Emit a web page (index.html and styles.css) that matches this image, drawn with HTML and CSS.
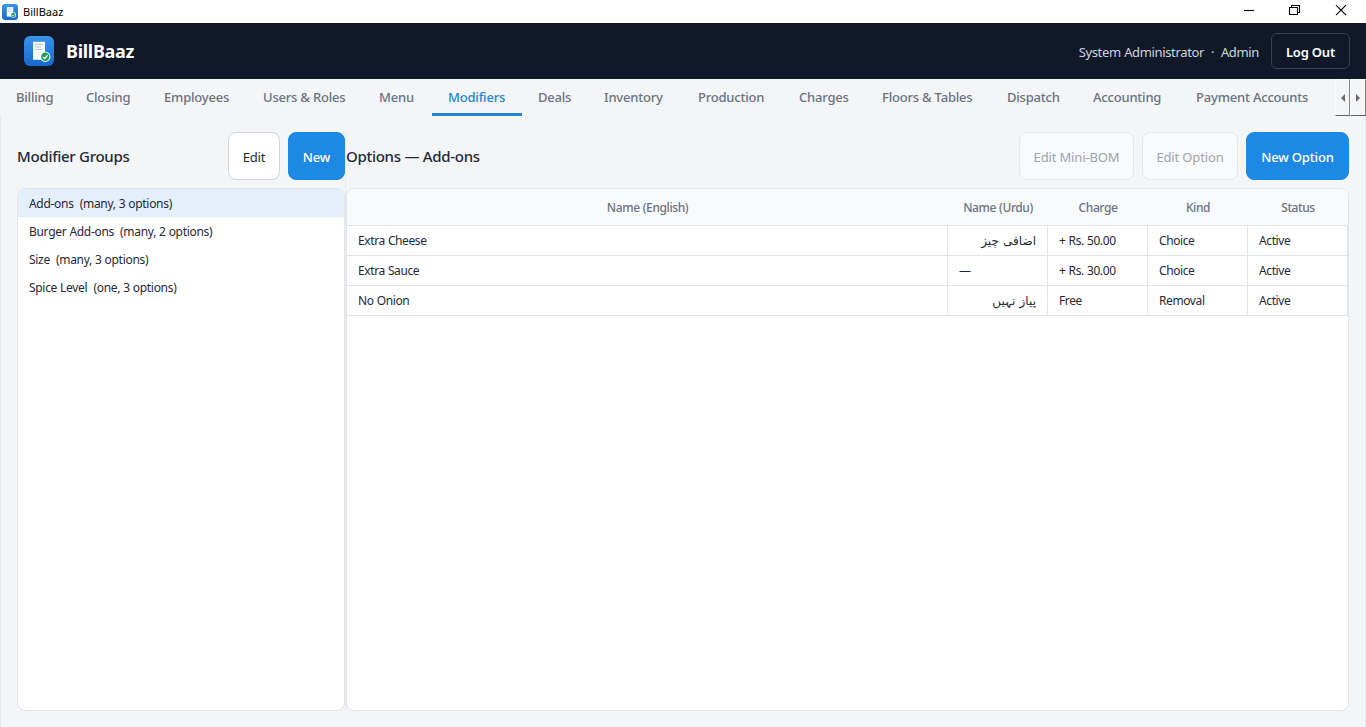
FILE: index.html
```
<!DOCTYPE html>
<html lang="en">
<head>
<meta charset="UTF-8">
<meta name="viewport" content="width=device-width, initial-scale=1.0">
<title>BillBaaz</title>
<link rel="stylesheet" href="styles.css">
</head>
<body>
  <!-- shared logo -->
  <svg width="0" height="0" class="defs">
    <defs>
      <linearGradient id="logoBlue" x1="0" y1="0" x2="0" y2="1">
        <stop offset="0" stop-color="#3a94ea"/>
        <stop offset="1" stop-color="#1769cc"/>
      </linearGradient>
      <symbol id="logo" viewBox="0 0 30 30">
        <rect width="30" height="30" rx="6" fill="url(#logoBlue)"/>
        <path d="M9 5.5l1 .5 1-.5 1 .5 1-.5 1 .5 1-.5 1 .5 1-.5 1 .5 1-.5 1 .5 1-.5V24l-1-.6-1 .6-1-.6-1 .6-1-.6-1 .6-1-.6-1 .6-1-.6-1 .6-1-.6-1 .6z" fill="#f7fafd"/>
        <path d="M11 8.500h8M11 11h6M11 13.500h8" stroke="#b3c7dc" stroke-width="1"/>
        <circle cx="21.300" cy="20.800" r="5.100" fill="#fff"/>
        <circle cx="21.300" cy="20.800" r="4.200" fill="#1f9d57"/>
        <path d="M19.100 21l1.600 1.600 2.900-3.300" fill="none" stroke="#fff" stroke-width="1.300"/>
      </symbol>
    </defs>
  </svg>

  <div class="titlebar">
    <svg class="title-icon" width="16" height="16"><use href="#logo"/></svg>
    <span class="title-text">BillBaaz</span>
    <div class="window-buttons">
      <svg width="46" height="23" viewBox="0 0 46 23"><path d="M18 10.500h10"/></svg>
      <svg width="46" height="23" viewBox="0 0 46 23"><path d="M17.500 7.500h8v7h-8zM19.500 7.500v-2h8v7h-2"/></svg>
      <svg width="46" height="23" viewBox="0 0 46 23"><path d="M18 5.200l10 10M28 5.200l-10 10"/></svg>
    </div>
  </div>

  <header class="header">
    <svg width="30" height="30"><use href="#logo"/></svg>
    <span class="brand">BillBaaz</span>
    <span class="user">System Administrator&nbsp; ·&nbsp; Admin</span>
    <button class="logout" type="button">Log Out</button>
  </header>

  <nav class="tabs">
    <a>Billing</a>
    <a>Closing</a>
    <a>Employees</a>
    <a>Users &amp; Roles</a>
    <a>Menu</a>
    <a class="active">Modifiers</a>
    <a>Deals</a>
    <a>Inventory</a>
    <a>Production</a>
    <a>Charges</a>
    <a>Floors &amp; Tables</a>
    <a>Dispatch</a>
    <a>Accounting</a>
    <a>Payment Accounts</a>
    <div class="scroller">
      <button type="button"><svg width="5" height="8"><path d="M5 0v8L1 4z"/></svg></button>
      <button type="button"><svg width="5" height="8"><path d="M0 0v8l4-4z"/></svg></button>
    </div>
  </nav>

  <main class="content">
    <section class="pane groups">
      <div class="toolbar">
        <h2>Modifier Groups</h2>
        <button class="btn edit" type="button">Edit</button>
        <button class="btn primary new" type="button">New</button>
      </div>
      <ul class="group-list">
        <li class="selected">Add-ons  (many, 3 options)</li>
        <li>Burger Add-ons  (many, 2 options)</li>
        <li>Size  (many, 3 options)</li>
        <li>Spice Level  (one, 3 options)</li>
      </ul>
    </section>
    <div class="splitter"></div>
    <section class="pane options">
      <div class="toolbar">
        <h2>Options — Add-ons</h2>
        <button class="btn bom" type="button" disabled>Edit Mini-BOM</button>
        <button class="btn edit-option" type="button" disabled>Edit Option</button>
        <button class="btn primary new-option" type="button">New Option</button>
      </div>
      <div class="table-box">
        <table>
          <colgroup><col class="col-name"><col><col><col><col></colgroup>
          <thead>
            <tr><th>Name (English)</th><th>Name (Urdu)</th><th>Charge</th><th>Kind</th><th>Status</th></tr>
          </thead>
          <tbody>
            <tr><td>Extra Cheese</td><td class="urdu" lang="ur" dir="rtl">اضافی چیز</td><td>+ Rs. 50.00</td><td>Choice</td><td>Active</td></tr>
            <tr><td>Extra Sauce</td><td>—</td><td>+ Rs. 30.00</td><td>Choice</td><td>Active</td></tr>
            <tr><td>No Onion</td><td class="urdu" lang="ur" dir="rtl">پیاز نہیں</td><td>Free</td><td>Removal</td><td>Active</td></tr>
          </tbody>
        </table>
      </div>
    </section>
  </main>
</body>
</html>
```
FILE: styles.css
```
* {
  box-sizing: border-box;
}

body {
  margin: 0;
  height: 727px;
  display: flex;
  flex-direction: column;
  overflow: hidden;
  background-color: #f3f5f7;
  color: #1f2937;
  font-family: "Noto Sans", "DejaVu Sans", sans-serif;
  font-size: 12px;
}

button {
  font-family: inherit;
  padding: 0;
}

.defs {
  position: absolute;
}

/* Window title bar */
.titlebar {
  height: 23px;
  flex: none;
  display: flex;
  align-items: center;
  background-color: #fff;
  color: #000;
  padding-left: 2px;
}

.title-text {
  margin-left: 5px;
  font-size: 11px;
}

.window-buttons {
  display: flex;
  margin-left: auto;
  margin-right: 2px;
}

.window-buttons path {
  fill: none;
  stroke: #000;
  stroke-width: 1.1;
}

/* Header */
.header {
  height: 56px;
  flex: none;
  display: flex;
  align-items: center;
  background-color: #111827;
  padding: 0 16px 0 24px;
}

.brand {
  margin-left: 12px;
  color: #fff;
  font-size: 18px;
  font-weight: 700;
  letter-spacing: -0.3px;
}

.user {
  margin-left: auto;
  padding-top: 2px;
  color: #cbd5e1;
  font-size: 13px;
  letter-spacing: -0.35px;
  word-spacing: 0.4px;
}

.logout {
  width: 79px;
  height: 36px;
  margin-left: 12px;
  padding-top: 2px;
  border: 1px solid #374151;
  border-radius: 6px;
  background-color: transparent;
  color: #fff;
  font-size: 13px;
  font-weight: 600;
  letter-spacing: -0.2px;
}

/* Tabs */
.tabs {
  height: 37px;
  flex: none;
  display: grid;
  grid-template-columns: 70px 78px 99px 116px 69px 90px 66px 94px 101px 83px 125px 86px 103px 155px 31px;
}

.tabs a {
  padding: 8px 0 0 16px;
  line-height: 20px;
  white-space: nowrap;
  color: #6b7280;
  font-size: 13px;
  font-weight: 500;
  letter-spacing: -0.2px;
}

.tabs a.active {
  color: #2484d2;
  border-bottom: 3px solid #2484d2;
}

.scroller {
  display: flex;
}

.scroller button {
  width: 15px;
  display: flex;
  align-items: center;
  justify-content: center;
  border: 1px solid #f9fafb;
  border-right-color: #858585;
  border-bottom: 1px solid #606060;
  background-color: #f3f5f7;
}

.scroller button:last-child {
  width: 16px;
}

.scroller path {
  fill: #6b6b6b;
}

/* Content */
.content {
  flex: 1;
  display: flex;
  padding: 16px;
  border: 1px solid #e8eaed;
  border-width: 0 1px;
}

.pane {
  display: flex;
  flex-direction: column;
}

.groups {
  width: 328px;
}

.splitter {
  width: 1px;
  background-color: #e8eaed;
}

.options {
  flex: 1;
}

.toolbar {
  height: 48px;
  display: flex;
  align-items: center;
  gap: 8px;
  margin-bottom: 8px;
}

.toolbar h2 {
  margin: 0 auto 0 0;
  color: #1f2937;
  font-size: 15px;
  font-weight: 500;
  letter-spacing: -0.28px;
}

.btn {
  height: 48px;
  padding-top: 2px;
  border: 1px solid #d1d5db;
  border-radius: 8px;
  background-color: #fff;
  color: #1f2937;
  font-size: 13px;
  letter-spacing: -0.15px;
}

.btn:disabled {
  border-color: #e5e7eb;
  background-color: #f9fafb;
  color: #9ca3af;
}

.primary {
  border-color: #1e88e5;
  background-color: #1e88e5;
  color: #fff;
  font-weight: 500;
}

.edit {
  width: 52px;
}

.new {
  width: 57px;
}

.bom {
  width: 115px;
}

.edit-option {
  width: 96px;
}

.new-option {
  width: 103px;
}

.group-list,
.table-box {
  flex: 1;
  margin: 0;
  padding: 0;
  overflow: hidden;
  border: 1px solid #e1e4e8;
  border-radius: 8px;
  background-color: #fff;
}

.group-list {
  list-style-type: none;
}

.group-list li {
  height: 28px;
  padding: 1px 11px 0;
  line-height: 28px;
  white-space: pre;
  letter-spacing: -0.3px;
  word-spacing: 0.2px;
}

.group-list .selected {
  background-color: #e3f0fb;
}

table {
  width: 1001px;
  table-layout: fixed;
  border-collapse: separate;
  border-spacing: 0;
}

col {
  width: 100px;
}

.col-name {
  width: 601px;
}

th,
td {
  border: 1px solid #e1e4e8;
  border-width: 0 1px 1px 0;
  white-space: nowrap;
  letter-spacing: -0.4px;
  word-spacing: 0.4px;
}

th {
  height: 37px;
  padding: 0;
  border-right: none;
  background-color: #f9fafb;
  color: #6b7280;
  font-weight: 500;
}

td {
  height: 30px;
  padding: 0 11px;
}

.urdu {
  padding-right: 12px;
  font-family: "DejaVu Sans", sans-serif;
  letter-spacing: 0;
}
```
